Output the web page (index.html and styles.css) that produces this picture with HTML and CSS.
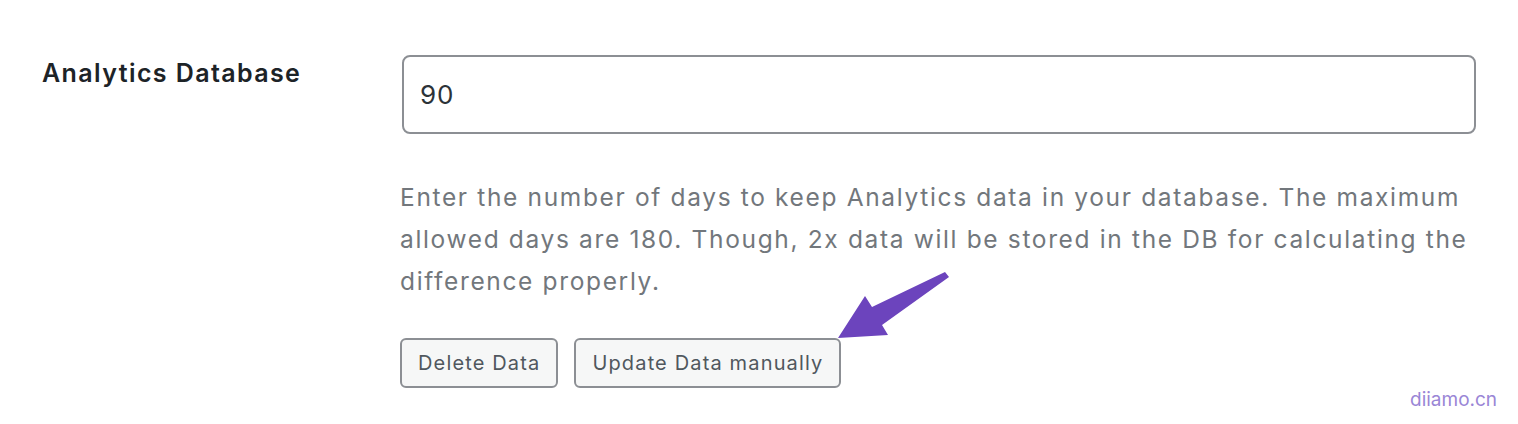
FILE: index.html
```html
<!DOCTYPE html>
<html lang="en">
<head>
  <meta charset="UTF-8" />
  <title>Analytics Database</title>
  <link rel="stylesheet" href="styles.css">
</head>
<body>
  <div class="settings">
    <div class="row">
      <div class="label">Analytics Database</div>
      <div class="field">
        <input type="text" class="text-input" value="90" />
        <p class="description">Enter the number of days to keep Analytics data in your database. The maximum allowed days are 180. Though, 2x data will be stored in the DB for calculating the difference properly.</p>
        <div class="buttons">
          <button type="button" class="btn">Delete Data</button>
          <button type="button" class="btn">Update Data manually</button>
        </div>
      </div>
    </div>
  </div>

  <svg class="arrow" width="120" height="80" viewBox="830 265 120 80">
    <polygon points="838,338 865,296 872,307 945,272 949,277 882,325 888,335" fill="#6c44bd" />
  </svg>

  <div class="watermark">diiamo.cn</div>
</body>
</html>
```

FILE: styles.css
```css
body {
  margin: 0;
  padding: 0;
  background: #ffffff;
  font-family: Inter, "Open Sans", Arial, sans-serif;
}
.settings {
  padding: 55px 0 0 42px;
}
.row {
  display: flex;
}
.label {
  width: 360px;
  font-size: 25px;
  font-weight: 600;
  letter-spacing: 1.4px;
  line-height: 36px;
  color: #1d2327;
}
.field {
  width: 1076px;
}
.text-input {
  display: block;
  box-sizing: border-box;
  width: 1074px;
  height: 79px;
  margin: 0;
  padding: 0 16px;
  border: 2px solid #8c8f94;
  border-radius: 8px;
  font-family: inherit;
  font-size: 26px;
  letter-spacing: 0.8px;
  color: #2c3338;
  background: #fff;
}
.description {
  margin: 42px 0 0 -2px;
  font-size: 24.5px;
  letter-spacing: 1.65px;
  line-height: 42px;
  color: #72777c;
}
.buttons {
  display: flex;
  gap: 16px;
  margin-top: 36px;
  margin-left: -2px;
}
.btn {
  height: 50px;
  padding: 0 16px;
  border: 2px solid #8c8f94;
  border-radius: 6px;
  background: #f6f7f7;
  color: #50575e;
  font-family: inherit;
  font-size: 20px;
  letter-spacing: 1.15px;
  cursor: pointer;
}
.arrow {
  position: absolute;
  left: 830px;
  top: 265px;
}
.watermark {
  position: absolute;
  left: 1410px;
  top: 388px;
  font-size: 19px;
  color: #9a86d6;
}
```
